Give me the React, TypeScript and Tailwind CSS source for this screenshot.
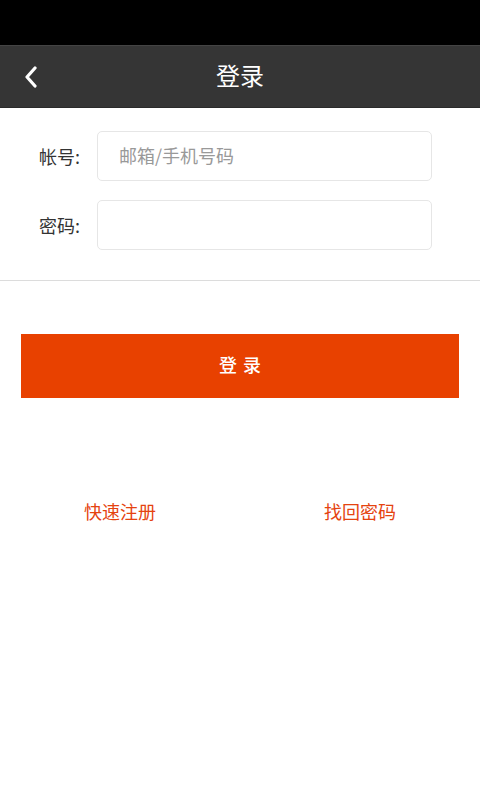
import { useState } from "react";

const font = { fontFamily: '"Noto Sans CJK SC", "Noto Sans", sans-serif' };

export default function App() {
  const [account, setAccount] = useState("");
  const [password, setPassword] = useState("");

  return (
    <div className="w-[480px] h-[800px] bg-white flex flex-col" style={font}>
      <div className="h-[45px] bg-black" />
      <header className="h-[63px] bg-[#353535] border-t border-[#444] border-b border-b-[#2a2a2a] flex items-center relative">
        <button className="absolute left-[22px] top-[19px] w-[18px] h-[24px] flex items-center justify-center">
          <svg width="16" height="22" viewBox="0 0 16 22" fill="none">
            <path d="M12 2 L4 11 L12 20" stroke="#fff" strokeWidth="3.2" strokeLinecap="round" strokeLinejoin="round" />
          </svg>
        </button>
        <h1 className="flex-1 text-center text-white text-[24px] leading-none pb-[3px]">登录</h1>
      </header>

      <div className="pt-[23px] pb-[30px] border-b border-[#dcdcdc] flex flex-col gap-[19px]">
        <div className="flex items-center">
          <label className="w-[81px] text-right text-[18px] text-[#333] pr-[1px]">帐号:</label>
          <input
            value={account}
            onChange={(e) => setAccount(e.target.value)}
            placeholder="邮箱/手机号码"
            className="ml-[16px] w-[335px] h-[50px] rounded-[5px] border border-[#e6e6e6] px-[21px] pb-[3px] text-[18px] text-[#333] placeholder:text-[#999] outline-none"
          />
        </div>
        <div className="flex items-center">
          <label className="w-[81px] text-right text-[18px] text-[#333] pr-[1px]">密码:</label>
          <input
            type="password"
            value={password}
            onChange={(e) => setPassword(e.target.value)}
            className="ml-[16px] w-[335px] h-[50px] rounded-[5px] border border-[#e6e6e6] px-[21px] text-[18px] text-[#333] outline-none"
          />
        </div>
      </div>

      <div className="px-[21px] pt-[53px]">
        <button className="w-full h-[64px] bg-[#e84100] text-white text-[18px] tracking-[6px] pl-[6px] pb-[4px] font-medium">登录</button>
      </div>

      <div className="flex mt-[100px]">
        <a className="flex-1 text-center text-[18px] text-[#e5430f]">快速注册</a>
        <a className="flex-1 text-center text-[18px] text-[#e5430f]">找回密码</a>
      </div>
    </div>
  );
}
